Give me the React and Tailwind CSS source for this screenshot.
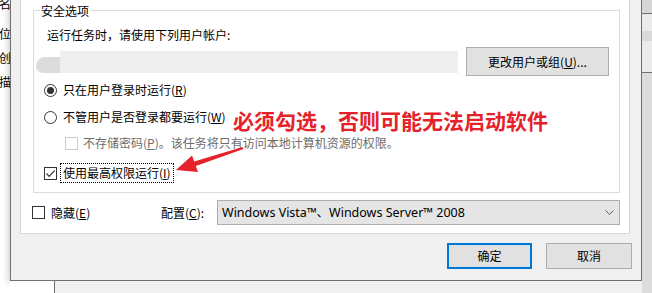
import React from "react";

function Radio({ checked }) {
  return (
    <span className="w-[13px] h-[13px] rounded-full border border-[#333333] bg-white flex items-center justify-center shrink-0">
      {checked && <span className="w-[7px] h-[7px] rounded-full bg-[#333333]"></span>}
    </span>
  );
}

function Check({ checked, disabled }) {
  return (
    <span
      className={
        disabled
          ? "w-[13px] h-[13px] border border-[#cccccc] bg-white shrink-0"
          : "w-[13px] h-[13px] border border-[#333333] bg-white shrink-0 flex items-center justify-center"
      }
    >
      {checked && (
        <svg width="11" height="11" viewBox="0 0 11 11">
          <path d="M1.5 5.5 L4.2 8.3 L9.6 2.6" fill="none" stroke="#333333" strokeWidth="1.2" />
        </svg>
      )}
    </span>
  );
}

export default function App() {
  return (
    <div className="relative w-[652px] h-[293px] overflow-hidden bg-white flex text-[12px] text-black font-['Noto_Sans_CJK_SC',sans-serif]">
      {/* window behind, left */}
      <div className="w-[10px] h-full overflow-hidden bg-white shrink-0">
        <div className="ml-[-1px] leading-[16px] whitespace-nowrap">
          <div className="mt-[-4px]">名</div>
          <div className="mt-[14px]">位</div>
          <div className="mt-[8px]">创</div>
          <div className="mt-[8px]">描</div>
        </div>
      </div>

      <div className="w-[632px] shrink-0 flex flex-col">
        {/* dialog */}
        <div className="h-[281px] bg-[#f0f0f0] border-x border-b border-[#707070] shadow-[0_2px_8px_rgba(0,0,0,0.28)] flex flex-col">
          {/* tab page */}
          <div className="ml-[9px] w-[610px] h-[234px] bg-white border-x border-b border-[#d9d9d9] flex flex-col">
            {/* group box */}
            <div className="relative ml-[12px] mt-[10px] w-[587px] h-[183px] border border-[#dcdcdc] flex flex-col">
              <span className="absolute left-[6px] top-[-8px] bg-white px-[1px] leading-[16px]">安全选项</span>

              <div className="pt-[16px] pl-[13px] h-[32px] leading-[16px]">运行任务时，请使用下列用户帐户:</div>

              <div className="mt-[4px] h-[29px] pl-[2px] flex items-center gap-[8px]">
                <div className="w-[422px] h-[22px] bg-[#efefef] flex">
                  <div className="w-[24px] h-full bg-white flex flex-col">
                    <div className="h-[6px]"></div>
                    <div className="flex-1 bg-[#dcdcdc] rounded-tl-[10px] rounded-bl-[8px]"></div>
                  </div>
                </div>
                <button className="w-[143px] h-[29px] bg-[#e1e1e1] border border-[#adadad] flex items-center justify-center leading-[16px]">
                  更改用户或组(<u>U</u>)...
                </button>
              </div>

              <div className="mt-[6px] h-[16px] pl-[10px] flex items-center gap-[6px] leading-[16px]">
                <Radio checked />
                <span>只在用户登录时运行(<u>R</u>)</span>
              </div>

              <div className="mt-[11px] h-[16px] pl-[10px] flex items-center gap-[6px] leading-[16px]">
                <Radio />
                <span>不管用户是否登录都要运行(<u>W</u>)</span>
              </div>

              <div className="mt-[10px] h-[16px] pl-[31px] flex items-center gap-[5px] leading-[16px] text-[#6d6d6d]">
                <Check disabled />
                <span>不存储密码(<u>P</u>)。该任务将只有访问本地计算机资源的权限。</span>
              </div>

              <div className="mt-[12px] h-[20px] pl-[10px] flex items-center gap-[3px] leading-[16px]">
                <Check checked />
                <span className="h-[20px] px-[2px] border border-dotted border-black flex items-center">
                  使用最高权限运行(<u>I</u>)
                </span>
              </div>
            </div>

            {/* hidden + config */}
            <div className="mt-[7px] h-[25px] pl-[11px] flex items-center leading-[16px]">
              <div className="w-[129px] flex items-center gap-[6px]">
                <Check />
                <span>隐藏(<u>E</u>)</span>
              </div>
              <div className="w-[56px]">配置(<u>C</u>):</div>
              <div className="w-[403px] h-[25px] bg-[#e5e5e5] border border-[#adadad] flex items-center pl-[4px] pr-[5px]">
                <span className="flex-1 font-['Noto_Sans','Noto_Sans_CJK_SC',sans-serif] text-[12.5px] whitespace-nowrap">
                  Windows Vista™、Windows Server™ 2008
                </span>
                <svg width="9" height="5" viewBox="0 0 9 5">
                  <path d="M0.5 0.5 L4.5 4.3 L8.5 0.5" fill="none" stroke="#606060" strokeWidth="1" />
                </svg>
              </div>
            </div>
          </div>

          {/* buttons */}
          <div className="mt-[9px] pr-[9px] flex justify-end gap-[14px] leading-[16px]">
            <button className="w-[85px] h-[26px] bg-[#e1e1e1] border-2 border-[#0078d7] flex items-center justify-center">
              确定
            </button>
            <button className="w-[86px] h-[26px] bg-[#e1e1e1] border border-[#adadad] flex items-center justify-center">
              取消
            </button>
          </div>
        </div>

        {/* below the dialog */}
        <div className="flex-1 flex">
          <div className="w-[44px] bg-white"></div>
          <div className="flex-1 bg-[#f0f0f0] border-l border-[#6b6b6b]"></div>
        </div>
      </div>

      {/* window behind, right */}
      <div className="w-[10px] shrink-0 flex flex-col bg-[#e6e6e6]">
        <div className="h-[13px] bg-[#d6d6d6]"></div>
        <div className="h-[1px] bg-[#6e6e6e]"></div>
        <div className="h-[17px] bg-[#ebebeb]"></div>
        <div className="h-[10px] bg-[#dadada]"></div>
        <div className="h-[31px] bg-[#ebebeb]"></div>
        <div className="h-[1px] bg-[#6e6e6e]"></div>
        <div className="flex-1 bg-[#dcdcdc]"></div>
      </div>

      {/* annotation */}
      <div className="absolute left-[233px] top-[110px] text-[21px] leading-[21px] font-bold text-[#e5222a] whitespace-nowrap">
        必须勾选，否则可能无法启动软件
      </div>
      <svg className="absolute left-[170px] top-[140px]" width="80" height="40" viewBox="0 0 80 40">
        <polygon
          points="6,30 28,32 25.8,26.1 73.4,9.1 72.6,6.9 24.2,21.4 22,15.5"
          fill="#e5222a"
        />
      </svg>
    </div>
  );
}
